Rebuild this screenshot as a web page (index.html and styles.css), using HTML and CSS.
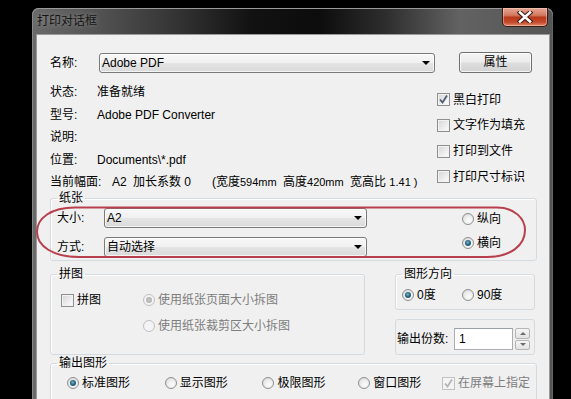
FILE: index.html
```html
<!DOCTYPE html>
<html>
<head>
<meta charset="utf-8">
<link rel="stylesheet" href="styles.css">
</head>
<body>
<div class="window">
  <div class="titlebar">
    <span class="title">打印对话框</span>
    <div class="close">
      <svg width="16" height="12" viewBox="0 0 16 12"><path d="M3 1.5 L13 10.5 M13 1.5 L3 10.5" stroke="#3a1a14" stroke-width="4.6" stroke-linecap="square"/><path d="M3 1.5 L13 10.5 M13 1.5 L3 10.5" stroke="#fff" stroke-width="2.6" stroke-linecap="square"/></svg>
    </div>
  </div>
  <div class="frame">
    <div class="client">
      <div class="row-name">
        <span class="lbl">名称:</span>
        <div class="combo combo-printer"><span>Adobe PDF</span><i class="arrow"></i></div>
        <div class="btn">属性</div>
      </div>

      <div class="info">
        <div class="info-left">
          <div class="irow"><span class="ilbl">状态:</span><span>准备就绪</span></div>
          <div class="irow"><span class="ilbl">型号:</span><span>Adobe PDF Converter</span></div>
          <div class="irow"><span class="ilbl">说明:</span><span></span></div>
          <div class="irow"><span class="ilbl">位置:</span><span>Documents\*.pdf</span></div>
          <div class="irow"><span class="ilbl2">当前幅面:</span><span class="a2">A2</span><span class="factor">加长系数 0</span><span class="dim1">(宽度<small>594mm</small></span><span class="dim2">高度<small>420mm</small></span><span class="dim3">宽高比 <small>1.41 )</small></span></div>
        </div>
        <div class="info-right">
          <div class="chk checked"><i class="box"><svg width="11" height="11" viewBox="0 0 11 11"><path d="M2 5.5 L4.5 8.5 L9 1.5" fill="none" stroke="#4b5b72" stroke-width="1.8"/></svg></i>黑白打印</div>
          <div class="chk"><i class="box"></i>文字作为填充</div>
          <div class="chk"><i class="box"></i>打印到文件</div>
          <div class="chk"><i class="box"></i>打印尺寸标识</div>
        </div>
      </div>

      <fieldset class="grp paper">
        <legend>纸张</legend>
        <div class="paper-body">
          <div class="paper-sel">
            <div class="prow"><span class="plbl">大小:</span><div class="combo combo-paper"><span>A2</span><i class="arrow"></i></div></div>
            <div class="prow"><span class="plbl">方式:</span><div class="combo combo-paper"><span>自动选择</span><i class="arrow"></i></div></div>
          </div>
          <div class="paper-orient">
            <div class="radio"><i class="rb"></i>纵向</div>
            <div class="radio on"><i class="rb"></i>横向</div>
          </div>
        </div>
      </fieldset>

      <div class="mid">
        <fieldset class="grp tile">
          <legend>拼图</legend>
          <div class="tile-body">
            <div class="tile-chk"><div class="chk"><i class="box"></i>拼图</div></div>
            <div class="tile-opts">
              <div class="radio on disabled"><i class="rb"></i>使用纸张页面大小拆图</div>
              <div class="radio disabled"><i class="rb"></i>使用纸张裁剪区大小拆图</div>
            </div>
          </div>
        </fieldset>
        <div class="mid-right">
          <fieldset class="grp orient">
            <legend>图形方向</legend>
            <div class="orient-body">
              <div class="radio on o0"><i class="rb"></i>0度</div>
              <div class="radio"><i class="rb"></i>90度</div>
            </div>
          </fieldset>
          <div class="copies">
            <span class="clbl">输出份数:</span>
            <div class="num">1</div>
            <div class="spin">
              <div class="sbtn"><i class="up"></i></div>
              <div class="sbtn"><i class="down"></i></div>
            </div>
          </div>
        </div>
      </div>

      <fieldset class="grp output">
        <legend>输出图形</legend>
        <div class="output-body">
          <div class="radio on w98"><i class="rb"></i>标准图形</div>
          <div class="radio w98"><i class="rb"></i>显示图形</div>
          <div class="radio w96"><i class="rb"></i>极限图形</div>
          <div class="radio w84"><i class="rb"></i>窗口图形</div>
          <div class="chk checked disabled"><i class="box"><svg width="11" height="11" viewBox="0 0 11 11"><path d="M2 5.5 L4.5 8.5 L9 1.5" fill="none" stroke="#b4b4b4" stroke-width="1.8"/></svg></i>在屏幕上指定</div>
        </div>
      </fieldset>
    </div>
  </div>
  <svg class="mark" width="494" height="56" viewBox="0 0 494 56"><path d="M40 2.5 L462 2.5 C480 2.5 490 14 490 25 C490 40 476 52 452 52 L44 52 C18 52 2 41 2 27 C2 13 16 2.5 40 2.5 Z" fill="none" stroke="#b8404c" stroke-width="2"/></svg>
</div>
</body>
</html>
```

FILE: styles.css
```css
html, body {
  margin: 0;
  height: 399px;
  overflow: hidden;
  background: #000;
}
body {
  font-family: "Liberation Sans", "Noto Sans CJK SC", sans-serif;
  font-size: 12px;
  color: #000;
}

.window {
  position: relative;
  margin: 8px 0 0 32px;
  width: 521px;
  height: 391px;
  border-radius: 7px 7px 0 0;
  background: linear-gradient(90deg, #6a6a6a 0%, #545454 12%, #333 28%, #121212 42%, #0c0c0c 55%, #2e2e2e 68%, #626262 82%, #555 100%);
  box-shadow: inset 0 1px 0 #9a9a9a, inset 1px 0 0 #888, inset -1px 0 0 #666;
}

.titlebar {
  height: 27px;
  display: flex;
  align-items: flex-start;
}
.title {
  margin: 5px 0 0 5px;
  line-height: 16px;
  color: #151515;
  text-shadow: 0 0 5px rgba(255,255,255,0.35);
}
.close {
  margin-left: auto;
  margin-right: 5px;
  width: 46px;
  height: 19px;
  box-sizing: border-box;
  border: 1px solid #3a1c14;
  border-top: none;
  border-radius: 0 0 5px 5px;
  background: linear-gradient(#e6a793 0%, #d47a62 40%, #b9391c 52%, #c4482a 78%, #e08a6a 100%);
  box-shadow: inset 0 0 0 1px rgba(255,220,210,0.45);
  display: flex;
  align-items: center;
  justify-content: center;
}

.frame {
  padding: 0 4px 0 5px;
}
.client {
  background: #f0f0f0;
  height: 364px;
  box-sizing: border-box;
  padding-top: 17px;
  line-height: 14px;
  box-shadow: 0 0 0 1px #9a9a9a;
}

.row-name {
  display: flex;
  align-items: center;
  height: 22px;
  padding-left: 13px;
}
.lbl {
  width: 49px;
}

.combo {
  display: flex;
  align-items: center;
  box-sizing: border-box;
  height: 20px;
  border: 1px solid #7a7a7a;
  border-radius: 3px;
  padding-left: 2px;
  background: linear-gradient(#f8f8f8, #f0f0f0 48%, #e4e4e4 52%, #dadada);
  box-shadow: inset 0 0 0 1px rgba(255,255,255,0.7);
}
.combo-printer {
  width: 336px;
}
.combo-paper {
  width: 263px;
}
.arrow {
  margin-left: auto;
  margin-right: 4px;
  width: 0;
  height: 0;
  border-left: 4px solid transparent;
  border-right: 4px solid transparent;
  border-top: 4px solid #000;
}

.btn {
  margin-left: 24px;
  margin-top: -2px;
  width: 73px;
  height: 21px;
  box-sizing: border-box;
  border: 1px solid #707070;
  border-radius: 3px;
  background: linear-gradient(#f4f4f4, #ececec 48%, #dedede 52%, #d2d2d2);
  box-shadow: inset 0 0 0 1px rgba(255,255,255,0.75);
  display: flex;
  align-items: center;
  justify-content: center;
}

.info {
  display: flex;
  margin-top: 7px;
  height: 110px;
}
.info-left {
  width: 387px;
  box-sizing: border-box;
  padding-left: 13px;
}
.irow {
  height: 22.5px;
  display: flex;
  align-items: center;
  white-space: nowrap;
}
.ilbl {
  width: 47px;
}
.ilbl2 {
  width: 62px;
}
.a2 {
  width: 21px;
}
.factor {
  width: 79px;
}
.dim1 {
  width: 71px;
}
.dim2 {
  width: 67px;
}
small {
  font-size: 11px;
}

.info-right {
  padding-top: 6px;
  padding-left: 13px;
}
.chk {
  display: flex;
  align-items: center;
  height: 25.67px;
  white-space: nowrap;
}
.box {
  width: 13px;
  height: 13px;
  box-sizing: border-box;
  margin-right: 3px;
  border: 1px solid #8e8f8f;
  background: linear-gradient(135deg, #d4d4d4, #f2f2f2 70%, #fbfbfb);
  box-shadow: inset 0 0 0 1px #f2f2f2;
  display: flex;
  align-items: center;
  justify-content: center;
}
.chk.disabled {
  color: #7d7d7d;
}
.chk.disabled .box {
  border-color: #c2c2c2;
  background: #f4f4f4;
}

.grp {
  margin: 0;
  min-width: 0;
  box-sizing: border-box;
  border: 1px solid #d3dbe0;
  border-radius: 3px;
  box-shadow: inset 1px 1px 0 #fff;
}
.grp legend {
  padding: 0 2px;
  line-height: 14px;
}

.paper {
  margin-left: 13px;
  width: 487px;
  padding: 3px 6px;
}
.paper-body {
  display: flex;
}
.prow {
  display: flex;
  align-items: center;
  height: 20px;
}
.prow + .prow {
  margin-top: 9px;
}
.plbl {
  width: 47px;
}
.paper-orient {
  margin-left: 95px;
  margin-top: -1px;
}
.paper-orient .radio {
  height: 24px;
}

.radio {
  display: flex;
  align-items: center;
  white-space: nowrap;
  height: 20px;
}
.rb {
  position: relative;
  width: 12px;
  height: 12px;
  box-sizing: border-box;
  margin-right: 3px;
  border: 1px solid #8e8f8f;
  border-radius: 50%;
  background: radial-gradient(circle at 60% 65%, #fbfbfb 0, #f0f0f0 40%, #d2d2d2 100%);
}
.radio.on .rb::after {
  content: "";
  position: absolute;
  left: 2px;
  top: 2px;
  width: 6px;
  height: 6px;
  border-radius: 50%;
  background: radial-gradient(circle at 45% 40%, #7fb3c8 0, #2a6a86 45%, #163f56 100%);
}
.radio.disabled {
  color: #7d7d7d;
}
.radio.disabled .rb {
  border-color: #c0c0c0;
  background: #f4f4f4;
}
.radio.disabled.on .rb::after {
  background: radial-gradient(circle, #c8c8c8 0, #a8a8a8 100%);
}

.mid {
  display: flex;
  margin-top: 6px;
  padding-left: 13px;
}
.tile {
  width: 315px;
  padding: 7px 6px 2px 6px;
}
.tile-body {
  display: grid;
  grid-template-columns: 86px 1fr;
}
.tile-chk .chk {
  height: 24px;
  margin-left: 4px;
}
.tile-opts .radio {
  height: 24px;
}
.tile-opts .radio + .radio {
  margin-top: 2px;
}

.mid-right {
  margin-left: 30px;
  width: 140px;
}
.orient {
  width: 140px;
  padding: 4px 6px;
}
.orient-body {
  display: flex;
}
.o0 {
  width: 60px;
}

.copies {
  margin-top: 9px;
  box-sizing: border-box;
  width: 140px;
  border: 1px solid #d3dbe0;
  border-radius: 3px;
  padding: 8px 0 4px 1px;
  display: flex;
  align-items: center;
}
.clbl {
  width: 57px;
  white-space: nowrap;
}
.num {
  width: 59px;
  height: 22px;
  box-sizing: border-box;
  border: 1px solid #abadb3;
  border-top-color: #9aa0a8;
  background: #fff;
  padding-left: 4px;
  display: flex;
  align-items: center;
}
.spin {
  margin-left: 2px;
  width: 15px;
  height: 22px;
  display: flex;
  flex-direction: column;
  gap: 1px;
}
.sbtn {
  flex: 1;
  box-sizing: border-box;
  border: 1px solid #b5b5b5;
  border-radius: 2px;
  background: linear-gradient(#f6f6f6, #e2e2e2);
  display: flex;
  align-items: center;
  justify-content: center;
}
.up {
  width: 0;
  height: 0;
  border-left: 3px solid transparent;
  border-right: 3px solid transparent;
  border-bottom: 3px solid #6a6a6a;
}
.down {
  width: 0;
  height: 0;
  border-left: 3px solid transparent;
  border-right: 3px solid transparent;
  border-top: 3px solid #6a6a6a;
}

.output {
  margin-top: 1px;
  margin-left: 13px;
  width: 487px;
  padding: 3px 6px 10px 6px;
}
.output-body {
  display: flex;
  padding-left: 10px;
}
.output-body .chk {
  height: 20px;
}
.w98 {
  width: 98px;
}
.w96 {
  width: 96px;
}
.w84 {
  width: 84px;
}

.mark {
  position: absolute;
  left: 3px;
  top: 197px;
}
```
